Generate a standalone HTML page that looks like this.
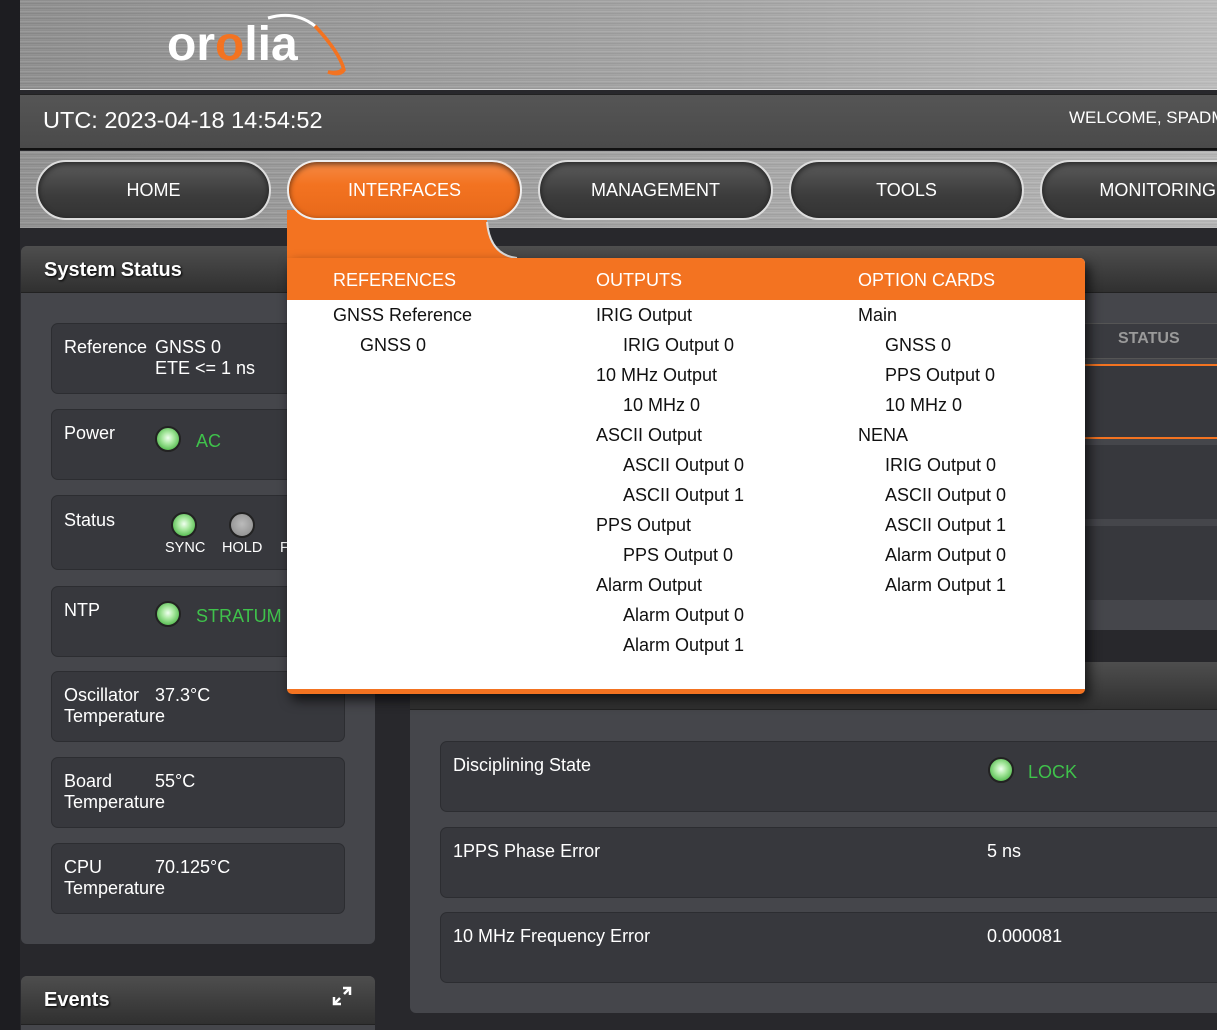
<!DOCTYPE html>
<html><head><meta charset="utf-8"><style>
*{margin:0;padding:0;box-sizing:border-box}
html,body{width:1217px;height:1030px;overflow:hidden}
body{background:#28282c;font-family:"Liberation Sans",sans-serif;position:relative}
.abs{position:absolute}
.btn{position:absolute;top:160px;width:235px;height:60px;border-radius:30px;background:linear-gradient(#5a5a5a,#3c3c3c 60%,#333);border:2px solid #ddd;box-shadow:inset 0 2px 6px rgba(0,0,0,.6);color:#fff;font-size:18px;text-align:center;line-height:56px}
.panel{position:absolute;background:#45464b;border-radius:6px}
.ph{position:absolute;left:0;right:0;top:0;height:47px;background:linear-gradient(#4e4e4e,#303030);border-radius:6px 6px 0 0;color:#fff;font-weight:bold;font-size:20px;padding:13px 0 0 23px;text-shadow:1px 1px 2px #000;border-bottom:1px solid #222}
.card{position:absolute;left:51px;width:294px;height:71px;background:#37383d;border-radius:7px;border:1px solid #2c2d31;color:#fff;font-size:18px}
.card span{position:absolute}
.led{position:absolute;width:26px;height:26px;border-radius:50%;background:radial-gradient(circle at 50% 45%,#f0fff0 0,#a9e8a0 35%,#4fb94a 80%);border:2px solid #222}
.grey{background:radial-gradient(circle at 50% 45%,#bbb,#888);}
.green{color:#3fc24b}
.rrow{position:absolute;left:440px;width:800px;height:71px;background:#37383d;border-radius:7px;border:1px solid #2c2d31;color:#fff;font-size:18px}
.rrow span{position:absolute}
.dd{position:absolute;left:287px;top:258px;width:798px;height:436px;background:#fff;border-radius:0 5px 5px 5px;border-bottom:5px solid #f37321;box-shadow:4px 6px 12px rgba(0,0,0,.7)}
.ddh{position:absolute;left:0;top:0;width:798px;height:42px;background:#f37321;border-radius:0 5px 0 0}
.col{position:absolute;top:0;font-size:18px;color:#111}
.col .h{color:#fff;height:42px;line-height:44px}
.col div.i{height:30px;line-height:30px}
.col div.s{padding-left:27px}
</style></head><body>
<div class="abs" style="left:0;top:0;width:20px;height:1030px;background:#1d1d21"></div>
<div class="abs" style="left:20px;top:0;width:1197px;height:90px;border-bottom:1px solid #ddd;background:linear-gradient(90deg,rgba(0,0,0,.05) 0%,rgba(255,255,255,.15) 60%,rgba(255,255,255,.35) 100%),repeating-linear-gradient(180deg,#8e8e8e 0px,#a9a9a9 2px,#888 3px,#9f9f9f 5px)"></div>
<div class="abs" style="left:167px;top:15px;font-size:48px;font-weight:bold;color:#fff;letter-spacing:0px;line-height:60px">or<span style="color:#f37321">o</span>lia</div>
<svg class="abs" style="left:240px;top:8px" width="120" height="75"><path d="M28 10 Q55 2 75 18" fill="none" stroke="#fff" stroke-width="3"/><path d="M75 18 Q100 45 104 62 Q100 68 88 64 Q100 66 104 60" fill="none" stroke="#f37321" stroke-width="3.5"/></svg>
<div class="abs" style="left:20px;top:94px;width:1197px;height:56px;background:linear-gradient(#555,#4a4a4a);border-top:1px solid #222;border-bottom:2px solid #111"></div>
<div class="abs" style="left:43px;top:107px;color:#fff;font-size:23.5px">UTC: 2023-04-18 14:54:52</div>
<div class="abs" style="left:1069px;top:108px;color:#fff;font-size:17px;white-space:nowrap">WELCOME, SPADMIN</div>
<div class="abs" style="left:20px;top:151px;width:1197px;height:77px;background:linear-gradient(90deg,rgba(0,0,0,.1),rgba(255,255,255,.2)),repeating-linear-gradient(180deg,#9a9a9a 0px,#b5b5b5 2px,#939393 3px,#aaa 5px)"></div>
<div class="btn" style="left:36px">HOME</div>
<div class="btn" style="left:538px">MANAGEMENT</div>
<div class="btn" style="left:789px">TOOLS</div>
<div class="btn" style="left:1040px;width:240px;padding-right:62px;text-align:right">MONITORING</div>
<div class="panel" style="left:21px;top:246px;width:354px;height:698px"><div class="ph">System Status</div></div>
<div class="card" style="top:323px"><span style="left:12px;top:13px">Reference</span><span style="left:103px;top:13px">GNSS 0</span><span style="left:103px;top:34px">ETE &lt;= 1 ns</span></div>
<div class="card" style="top:409px"><span style="left:12px;top:13px">Power</span><div class="led" style="left:103px;top:16px"></div><span class="green" style="left:144px;top:21px">AC</span></div>
<div class="card" style="top:495px;height:75px"><span style="left:12px;top:14px">Status</span><div class="led" style="left:119px;top:16px"></div><div class="led grey" style="left:177px;top:16px"></div><div class="led grey" style="left:235px;top:16px"></div><span style="left:113px;top:44px;font-size:14.5px">SYNC</span><span style="left:170px;top:44px;font-size:14.5px">HOLD</span><span style="left:228px;top:44px;font-size:14.5px">FAULT</span></div>
<div class="card" style="top:586px"><span style="left:12px;top:13px">NTP</span><div class="led" style="left:103px;top:14px"></div><span class="green" style="left:144px;top:19px">STRATUM 1</span></div>
<div class="card" style="top:671px"><span style="left:12px;top:13px">Oscillator</span><span style="left:103px;top:13px">37.3°C</span><span style="left:12px;top:34px">Temperature</span></div>
<div class="card" style="top:757px"><span style="left:12px;top:13px">Board</span><span style="left:103px;top:13px">55°C</span><span style="left:12px;top:34px">Temperature</span></div>
<div class="card" style="top:843px"><span style="left:12px;top:13px">CPU</span><span style="left:103px;top:13px">70.125°C</span><span style="left:12px;top:34px">Temperature</span></div>
<div class="panel" style="left:21px;top:976px;width:354px;height:54px;border-radius:6px 6px 0 0"><div class="ph" style="height:49px">Events</div></div>
<svg class="abs" style="left:332px;top:986px" width="20" height="20"><path d="M11 2h7v7M18 2l-6 6M9 18H2v-7M2 18l6-6" stroke="#fff" stroke-width="2.5" fill="none"/></svg>
<div class="panel" style="left:410px;top:246px;width:830px;height:384px"><div class="ph"></div></div>
<div class="abs" style="left:410px;top:323px;width:807px;height:36px;background:#3a3b40;border-top:1px solid #555;border-bottom:1px solid #555"></div>
<div class="abs" style="left:1118px;top:330px;color:#9a9a9a;font-weight:bold;font-size:16px">STATUS</div>
<div class="abs" style="left:410px;top:364px;width:807px;height:75px;background:#37383d;border-top:2px solid #f37321;border-bottom:2px solid #f37321"></div>
<div class="abs" style="left:410px;top:445px;width:807px;height:74px;background:#37383d"></div>
<div class="abs" style="left:410px;top:526px;width:807px;height:74px;background:#37383d"></div>
<div class="panel" style="left:410px;top:662px;width:830px;height:351px"><div class="ph" style="height:48px"></div></div>
<div class="rrow" style="top:741px"><span style="left:12px;top:13px">Disciplining State</span><div class="led" style="left:547px;top:15px"></div><span class="green" style="left:587px;top:20px">LOCK</span></div>
<div class="rrow" style="top:827px"><span style="left:12px;top:13px">1PPS Phase Error</span><span style="left:546px;top:13px">5 ns</span></div>
<div class="rrow" style="top:912px"><span style="left:12px;top:13px">10 MHz Frequency Error</span><span style="left:546px;top:13px">0.000081</span></div>
<svg class="abs" style="left:280px;top:150px" width="250" height="115"><path d="M7 60 L207 60 L207 72 Q210 105 237 108 L7 108 Z" fill="#f37321"/><path d="M207 72 Q210 105 237 108" fill="none" stroke="#ddd" stroke-width="2"/></svg>
<div class="btn" style="left:287px;background:linear-gradient(#f58a45,#f37321 40%,#e8691a);border-color:#eee">INTERFACES</div>
<div class="dd"><div class="ddh"></div>
<div class="col" style="left:46px"><div class="h">REFERENCES</div><div class="i">GNSS Reference</div><div class="i s">GNSS 0</div></div>
<div class="col" style="left:309px"><div class="h">OUTPUTS</div><div class="i">IRIG Output</div><div class="i s">IRIG Output 0</div><div class="i">10 MHz Output</div><div class="i s">10 MHz 0</div><div class="i">ASCII Output</div><div class="i s">ASCII Output 0</div><div class="i s">ASCII Output 1</div><div class="i">PPS Output</div><div class="i s">PPS Output 0</div><div class="i">Alarm Output</div><div class="i s">Alarm Output 0</div><div class="i s">Alarm Output 1</div></div>
<div class="col" style="left:571px"><div class="h">OPTION CARDS</div><div class="i">Main</div><div class="i s">GNSS 0</div><div class="i s">PPS Output 0</div><div class="i s">10 MHz 0</div><div class="i">NENA</div><div class="i s">IRIG Output 0</div><div class="i s">ASCII Output 0</div><div class="i s">ASCII Output 1</div><div class="i s">Alarm Output 0</div><div class="i s">Alarm Output 1</div></div>
</div>
</body></html>
